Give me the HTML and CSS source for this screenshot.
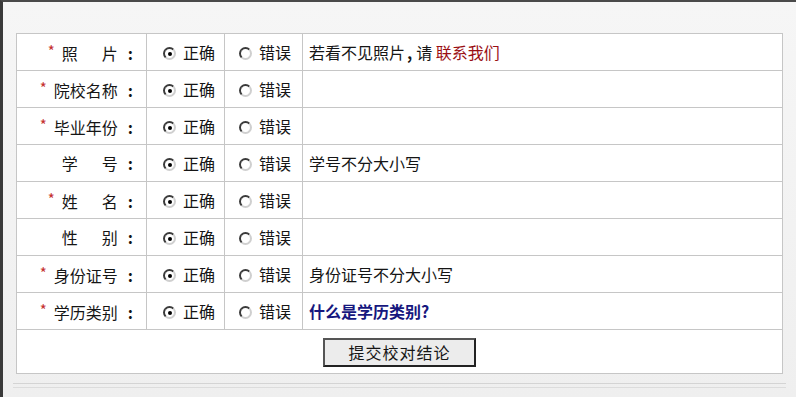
FILE: index.html
```html
<!DOCTYPE html>
<html lang="zh-CN">
<head>
    <meta charset="UTF-8">
    <title>校对信息</title>
    <link rel="stylesheet" href="styles.css">
</head>
<body>
    <div class="frame">
        <table class="check">
            <tr>
                <td class="label"><span class="req">*</span>照&emsp;&ensp;片<span class="colon">:</span></td>
                <td class="ok"><span class="radio on"></span>正确</td>
                <td class="bad"><span class="radio"></span>错误</td>
                <td class="note">若看不见照片<b class="comma">,</b>请 <a class="contact" href="#">联系我们</a></td>
            </tr>
            <tr>
                <td class="label"><span class="req">*</span>院校名称<span class="colon">:</span></td>
                <td class="ok"><span class="radio on"></span>正确</td>
                <td class="bad"><span class="radio"></span>错误</td>
                <td class="note"></td>
            </tr>
            <tr>
                <td class="label"><span class="req">*</span>毕业年份<span class="colon">:</span></td>
                <td class="ok"><span class="radio on"></span>正确</td>
                <td class="bad"><span class="radio"></span>错误</td>
                <td class="note"></td>
            </tr>
            <tr>
                <td class="label">学&emsp;&ensp;号<span class="colon">:</span></td>
                <td class="ok"><span class="radio on"></span>正确</td>
                <td class="bad"><span class="radio"></span>错误</td>
                <td class="note">学号不分大小写</td>
            </tr>
            <tr>
                <td class="label"><span class="req">*</span>姓&emsp;&ensp;名<span class="colon">:</span></td>
                <td class="ok"><span class="radio on"></span>正确</td>
                <td class="bad"><span class="radio"></span>错误</td>
                <td class="note"></td>
            </tr>
            <tr>
                <td class="label">性&emsp;&ensp;别<span class="colon">:</span></td>
                <td class="ok"><span class="radio on"></span>正确</td>
                <td class="bad"><span class="radio"></span>错误</td>
                <td class="note"></td>
            </tr>
            <tr>
                <td class="label"><span class="req">*</span>身份证号<span class="colon">:</span></td>
                <td class="ok"><span class="radio on"></span>正确</td>
                <td class="bad"><span class="radio"></span>错误</td>
                <td class="note">身份证号不分大小写</td>
            </tr>
            <tr>
                <td class="label"><span class="req">*</span>学历类别<span class="colon">:</span></td>
                <td class="ok"><span class="radio on"></span>正确</td>
                <td class="bad"><span class="radio"></span>错误</td>
                <td class="note"><a class="help" href="#">什么是学历类别?</a></td>
            </tr>
            <tr class="submit-row">
                <td colspan="4"><button class="submit">提交校对结论</button></td>
            </tr>
        </table>
        <div class="rule"></div>
    </div>
</body>
</html>
```

FILE: styles.css
```css
body {
    margin: 0;
    background-color: #f3f3f3;
    font-family: "Noto Sans CJK SC", "Liberation Sans", sans-serif;
    font-size: 16px;
    color: #151515;
}
.frame {
    box-sizing: border-box;
    height: 397px;
    border-top: 2px solid #4a4a4a;
    border-left: 3px solid #3a3a3a;
    padding: 31px 13px 0 13px;
    background: linear-gradient(#f6f6f6, #efefef);
}
.check {
    width: 100%;
    border-collapse: collapse;
    background-color: #fff;
    border: 1px solid #bdbdbd;
}
.check td {
    border: 1px solid #c6c6c6;
    height: 36px;
    padding: 0;
    line-height: 20px;
    white-space: nowrap;
}
.rule {
    margin: 9px -3px 0 -3px;
    height: 3px;
    border-top: 1px solid #d4d4d4;
    border-bottom: 1px solid #dcdcdc;
}
.label {
    width: 116px;
    text-align: right;
    padding-right: 13px !important;
}
.colon {
    margin-left: 10px;
    font-weight: bold;
}
.req {
    color: #c4302f;
    font-size: 15px;
    vertical-align: 3px;
    margin-right: 7px;
}
.ok {
    width: 61px;
    padding-left: 16px !important;
}
.bad {
    width: 63px;
    padding-left: 14px !important;
}
.note {
    padding-left: 6px !important;
}
.radio {
    display: inline-block;
    box-sizing: border-box;
    width: 13px;
    height: 13px;
    border-radius: 50%;
    border: 2px solid;
    border-color: #3a3a3a #cfcfcf #cfcfcf #3a3a3a;
    background-color: #fff;
    margin-right: 7px;
    vertical-align: -1px;
    position: relative;
}
.radio.on::after {
    content: "";
    position: absolute;
    left: 2.5px;
    top: 2.5px;
    width: 4px;
    height: 4px;
    border-radius: 50%;
    background-color: #000;
}
.comma {
    margin: 0 4px 0 2px;
}
.contact {
    color: #9a0f14;
    text-decoration: none;
}
.help {
    color: #16177e;
    font-weight: bold;
    text-decoration: none;
}
.submit-row td {
    height: 43px;
    text-align: center;
}
.submit {
    width: 153px;
    height: 29px;
    margin-top: 1px;
    font-family: inherit;
    font-size: 16px;
    letter-spacing: 1px;
    color: #151515;
    background-color: #ececec;
    border: 2px solid;
    border-color: #555 #222 #222 #555;
    border-radius: 0;
    padding: 0;
}
```
